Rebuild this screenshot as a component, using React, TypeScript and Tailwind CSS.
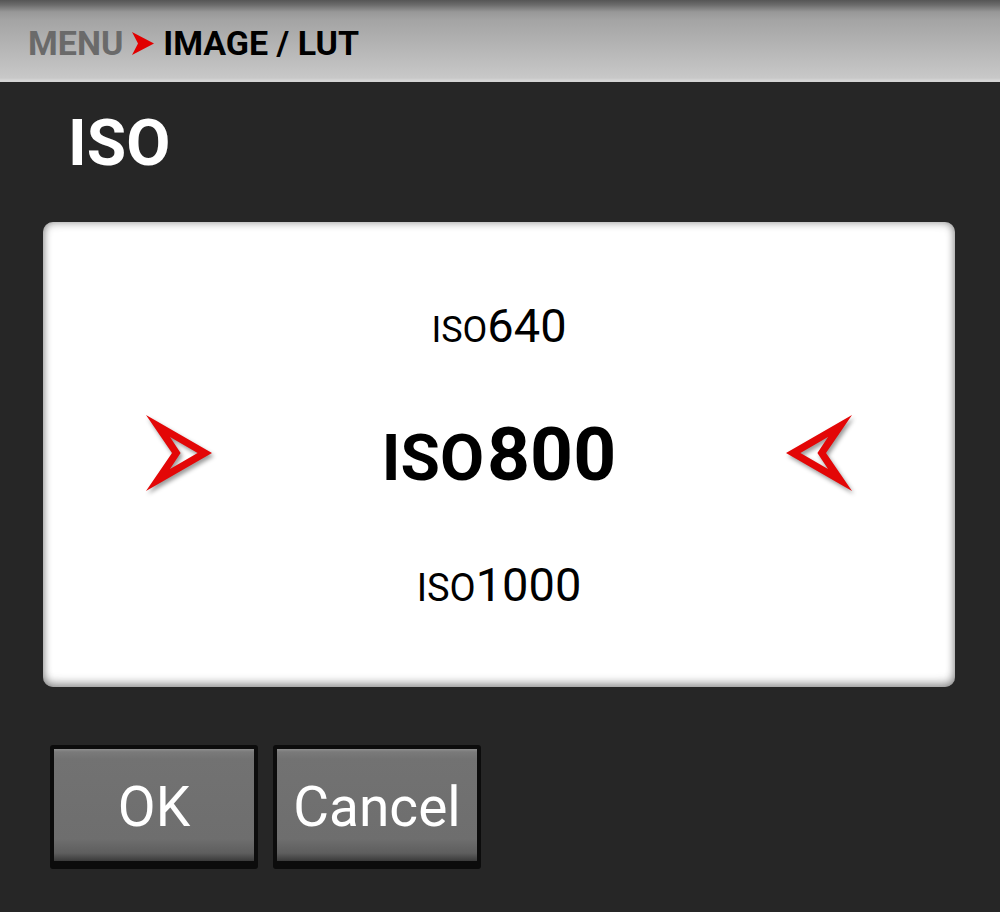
import React from "react";

function HeaderArrow() {
  return (
    <svg width="24" height="25" viewBox="0 0 24 25" className="mx-[8px] mt-[1px]">
      <path d="M1 1 L23 12.5 L1 24 L7 12.5 Z" fill="#e10000" />
    </svg>
  );
}

function LeftArrow() {
  return (
    <svg width="72" height="82" viewBox="0 0 72 82" className="drop-shadow-[2px_3px_2px_rgba(0,0,0,0.4)]">
      <path
        d="M3 3 L69 41 L3 79 L29 41 Z M27 25 L37.6 41 L27 57 L54.6 41 Z"
        fill="#e30707"
        fillRule="evenodd"
      />
    </svg>
  );
}

function RightArrow() {
  return (
    <svg width="72" height="82" viewBox="0 0 72 82" className="drop-shadow-[2px_3px_2px_rgba(0,0,0,0.4)]">
      <path
        d="M69 3 L3 41 L69 79 L43 41 Z M45 25 L34.4 41 L45 57 L17.4 41 Z"
        fill="#e30707"
        fillRule="evenodd"
      />
    </svg>
  );
}

function IsoValue({ value, iso }: { value: string; iso: string }) {
  return (
    <div className="flex h-[45px] items-baseline justify-center leading-none text-black">
      <span className={iso}>ISO</span>
      <span className="text-[47px]">{value}</span>
    </div>
  );
}

function Button({ label }: { label: string }) {
  return (
    <div className="h-[124px] w-[208px] rounded-[3px] bg-[#0c0c0c] px-[4px] pb-[8px] pt-[4px]">
      <div className="flex h-full w-full items-center justify-center bg-[linear-gradient(to_bottom,#8e8e8e_0px,#7a7a7a_3px,#727272_10px,#6e6e6e_90px,#5e5e5e_104px,#3a3a3a_112px)] pt-[4px] text-[55px] leading-none text-white">
        {label}
      </div>
    </div>
  );
}

export default function App() {
  return (
    <div className="flex h-[912px] w-[1000px] flex-col bg-[#262626] font-['Roboto',sans-serif]">
      <div className="flex h-[82px] shrink-0 items-center bg-[linear-gradient(to_bottom,#555555_0px,#6c6c6c_5px,#989898_12px,#a4a4a4_20px,#c8c8c8_78px,#d4d4d4_80px,#d4d4d4_82px)] px-[28px] pt-[3px]">
        <span className="text-[34px] font-bold leading-none text-[#6a6a6a]">MENU</span>
        <HeaderArrow />
        <span className="text-[34px] font-bold leading-none text-black">IMAGE / LUT</span>
      </div>

      <div className="mt-[30px] pl-[68px] text-[64px] font-bold leading-none text-white">ISO</div>

      <div className="ml-[43px] mt-[46px] flex h-[465px] w-[912px] flex-col rounded-[10px] bg-white pt-[80px] shadow-[inset_0_0_10px_rgba(0,0,0,0.45),inset_0_-6px_8px_rgba(0,0,0,0.18)]">
        <IsoValue value="640" iso="text-[36px]" />
        <div className="mt-[66px] flex h-[80px] items-center justify-between px-[100px]">
          <LeftArrow />
          <div className="flex flex-1 items-baseline justify-center pt-[3px] font-bold leading-none text-black">
            <span className="text-[64px]">ISO</span>
            <span className="ml-[3px] text-[75px]">800</span>
          </div>
          <RightArrow />
        </div>
        <div className="mt-[68px]">
          <IsoValue value="1000" iso="text-[38px]" />
        </div>
      </div>

      <div className="ml-[50px] mt-[58px] flex gap-[15px]">
        <Button label="OK" />
        <Button label="Cancel" />
      </div>
    </div>
  );
}
